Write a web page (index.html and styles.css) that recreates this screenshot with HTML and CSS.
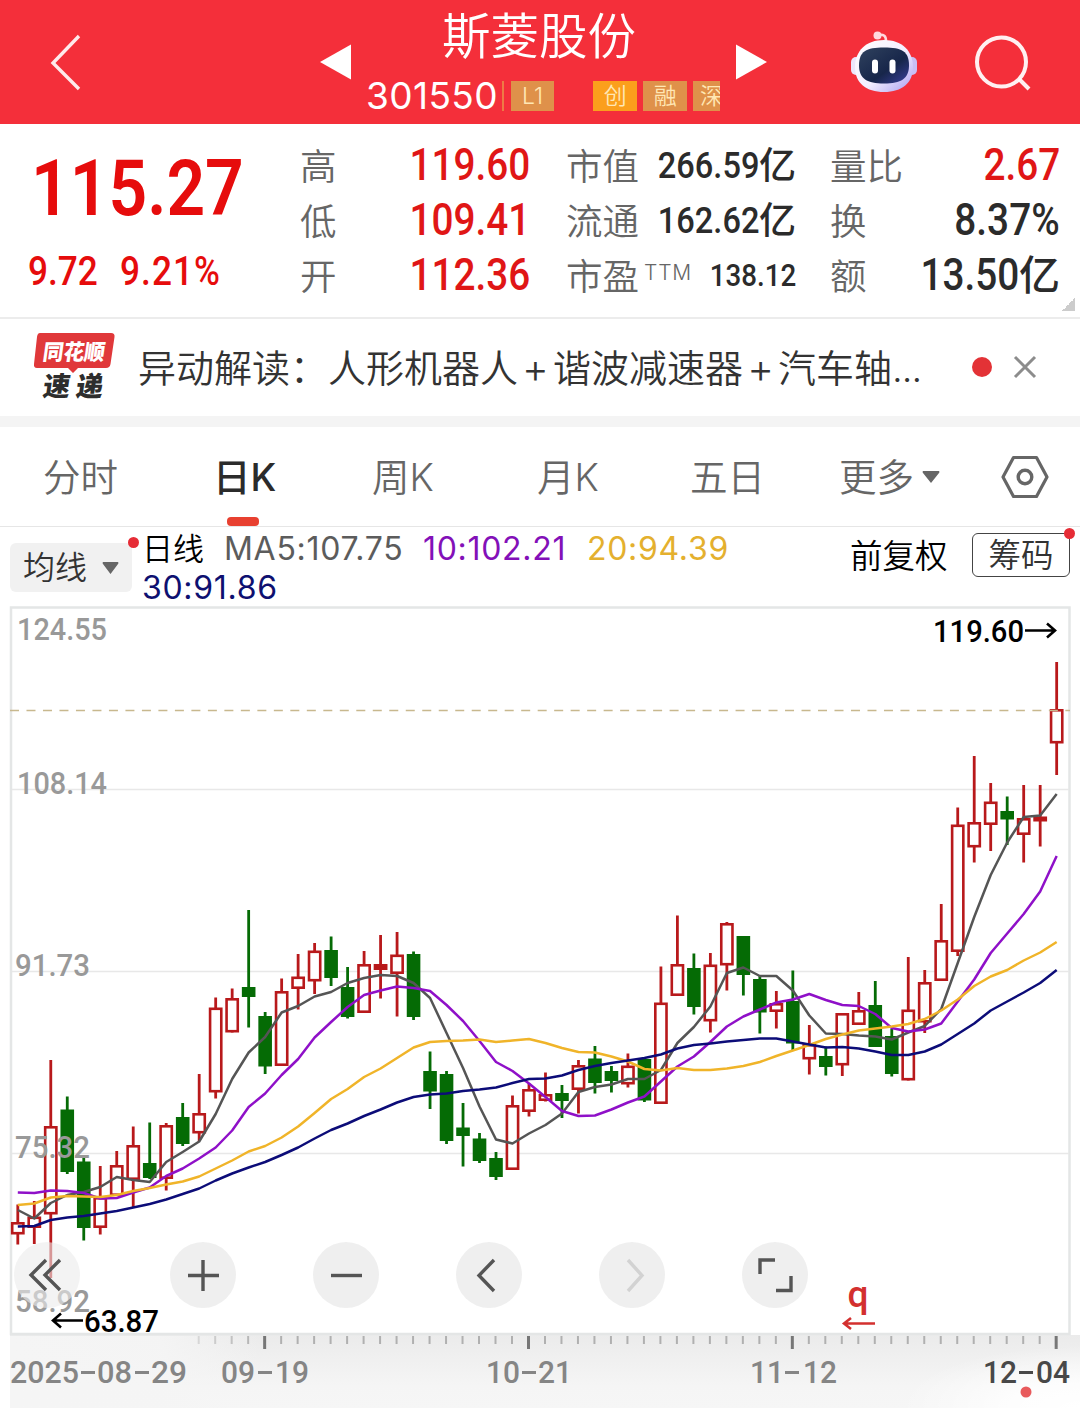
FILE: index.html
```html
<!DOCTYPE html>
<html lang="zh-CN">
<head>
<meta charset="utf-8">
<title>斯菱股份 301550</title>
<link rel="stylesheet" href="styles.css">
</head>
<body>
<header class="topbar">
  <svg class="back" width="34" height="60" viewBox="0 0 34 60"><path d="M31 4 5 31l26 26" fill="none" stroke="#fff" stroke-opacity=".9" stroke-width="3.4"/></svg>
  <svg class="prev" width="32" height="36" viewBox="0 0 32 36"><path d="M0 18 31 0.500v35z" fill="#fff"/></svg>
  <div class="stock">
    <h1 class="stock-name">斯菱股份</h1>
    <div class="stock-meta">
      <span class="code">301550</span><i class="bar"></i>
      <span class="badge level">L1</span>
      <span class="badge hot">创</span>
      <span class="badge">融</span>
      <span class="badge cut">深</span>
    </div>
  </div>
  <svg class="next" width="32" height="36" viewBox="0 0 32 36"><path d="M31 18 0 0.500v35z" fill="#fff"/></svg>
  <svg class="robot" width="68" height="64" viewBox="850 30 68 64">
    <defs>
      <linearGradient id="head" x1="0" y1="0" x2="1" y2="1"><stop offset="0" stop-color="#fff"/><stop offset=".55" stop-color="#f3eeff"/><stop offset="1" stop-color="#a99cf0"/></linearGradient>
      <linearGradient id="face" x1="0" y1="0" x2="1" y2="1"><stop offset="0" stop-color="#30425e"/><stop offset=".6" stop-color="#17264a"/><stop offset="1" stop-color="#3a3f9c"/></linearGradient>
    </defs>
    <path d="M879 35c6-1 8 1 8 6" fill="none" stroke="#ffd9de" stroke-width="2.600"/>
    <circle cx="878.500" cy="35.500" r="4" fill="#ffd9de"/>
    <rect x="852" y="57" width="10" height="18" rx="5" fill="#ece6fb"/>
    <rect x="908" y="57" width="10" height="18" rx="5" fill="#c9bff5"/>
    <path d="M885 40c18 0 29 11 29 27s-11 25-29 25-29-9-29-25 11-27 29-27z" fill="url(#head)"/>
    <path d="M885 47.500c18 0 25 4 25 18 0 13-8 18-25 18s-25-5-25-18c0-14 7-18 25-18z" fill="url(#face)"/>
    <rect x="873" y="59.500" width="6" height="14" rx="3" fill="#fff"/>
    <rect x="890.500" y="59.500" width="6" height="14" rx="3" fill="#fff"/>
  </svg>
  <svg class="search" width="58" height="58" viewBox="0 0 58 58"><circle cx="27.500" cy="28" r="24.500" fill="none" stroke="#fff" stroke-opacity=".93" stroke-width="4"/><path d="m45 45 10 10" stroke="#fff" stroke-opacity=".93" stroke-width="4"/></svg>
</header>

<section class="quote">
  <div class="price">
    <div class="price-now"><span class="num">115.27</span></div>
    <div class="price-diff"><span class="num">9.72</span><span class="num">9.21%</span></div>
  </div>
  <dl class="facts facts-a">
    <dt>高</dt><dd class="up"><span class="num">119.60</span></dd>
    <dt>低</dt><dd class="up"><span class="num">109.41</span></dd>
    <dt>开</dt><dd class="up"><span class="num">112.36</span></dd>
  </dl>
  <dl class="facts facts-b">
    <dt>市值</dt><dd><span class="num">266.59</span>亿</dd>
    <dt>流通</dt><dd><span class="num">162.62</span>亿</dd>
    <dt>市盈<sup>TTM</sup></dt><dd class="small"><span class="num">138.12</span></dd>
  </dl>
  <dl class="facts facts-c">
    <dt>量比</dt><dd class="up"><span class="num">2.67</span></dd>
    <dt>换</dt><dd><span class="num">8.37%</span></dd>
    <dt>额</dt><dd><span class="num">13.50</span>亿</dd>
  </dl>
  <i class="corner"></i>
</section>

<section class="news">
  <svg class="news-logo" width="84" height="74" viewBox="32 331 84 74">
    <path d="M40 333h71q4 0 3.500 4l-4 27q-.6 4-4.500 4H78l-5 5-5-5H37q-3.500 0-3-4l3-27q.5-4 3-4z" fill="#e0383a"/>
    <g class="logo-text"><text transform="translate(42 359.500) skewX(-8)" font-size="22" textLength="62" lengthAdjust="spacingAndGlyphs" fill="#fff">同花顺</text>
    <text transform="translate(42 395.500) skewX(-8)" font-size="27" textLength="60" lengthAdjust="spacing" fill="#2d2d2d">速递</text></g>
  </svg>
  <p class="news-title">异动解读：人形机器人<span class="plus">+</span>谐波减速器<span class="plus">+</span>汽车轴<span class="dots">...</span></p>
  <i class="news-dot"></i>
  <svg class="close" width="24" height="24" viewBox="0 0 24 24"><path d="M2 2l20 20M22 2 2 22" stroke="#8c8c8c" stroke-width="3"/></svg>
</section>

<nav class="tabs">
  <span class="tab">分时</span>
  <span class="tab active">日K</span>
  <span class="tab">周K</span>
  <span class="tab">月K</span>
  <span class="tab">五日</span>
  <span class="tab">更多<svg class="caret" width="18" height="12" viewBox="0 0 18 12"><path d="M1 0h16q1 1 0 2L9 12 1 2Q0 1 1 0z" fill="#666"/></svg></span>
  <svg class="gear" width="48" height="44" viewBox="0 0 48 44"><path d="M12.500 2.500h23L46 22 35.500 41.500h-23L2 22z" fill="none" stroke="#666" stroke-width="3.200" stroke-linejoin="round"/><circle cx="24" cy="22" r="6.800" fill="none" stroke="#666" stroke-width="3.400"/></svg>
</nav>

<section class="legend">
  <div class="picker">均线<svg width="17" height="12" viewBox="0 0 17 12"><path d="M1 0h15q1 1 0 2L8.500 12 1 2Q0 1 1 0z" fill="#666"/></svg><i class="dot"></i></div>
  <div class="averages">
    <div class="line"><span class="period">日线</span><span class="ma5">MA5:107.75</span><span class="ma10">10:102.21</span><span class="ma20">20:94.39</span></div>
    <div class="line"><span class="ma30">30:91.86</span></div>
  </div>
  <span class="adjust">前复权</span>
  <span class="chips">筹码<i class="dot"></i></span>
</section>

<section class="chart">
  <svg class="plot" width="1080" height="802" viewBox="0 606 1080 802">
    <defs>
      <linearGradient id="axis" x1="0" y1="0" x2="0" y2="1"><stop offset="0" stop-color="#ebebeb"/><stop offset=".7" stop-color="#f5f5f5"/><stop offset="1" stop-color="#f6f6f6"/></linearGradient>
      <linearGradient id="fadeLeft"><stop offset="0" stop-color="#f5f5f5"/><stop offset=".6" stop-color="#f5f5f5" stop-opacity=".9"/><stop offset="1" stop-color="#f5f5f5" stop-opacity="0"/></linearGradient>
      <radialGradient id="fadeRight" cx="1" cy="1" r="1"><stop offset="0" stop-color="#fff"/><stop offset=".4" stop-color="#fff" stop-opacity=".8"/><stop offset="1" stop-color="#fff" stop-opacity="0"/></radialGradient>
    </defs>
    <rect x="10" y="1335" width="1070" height="73" fill="url(#axis)"/>
    <g id="ticks"></g>
    <rect x="10" y="1336" width="250" height="72" fill="url(#fadeLeft)"/>
    <rect x="900" y="1346" width="180" height="62" fill="url(#fadeRight)"/>
    <path d="M11 607.500v726.500h1058.500V607.500z" fill="none" stroke="#e4e6e6" stroke-width="2.500"/>
    <path d="M12 789.500h1057M12 971.500h1057M12 1153.500h1057" stroke="#e8e8e8" stroke-width="1.500"/>
    <g id="candles"></g>
    <g id="averages"></g>
    <path d="M10 710.500h1060" stroke="#c8b88e" stroke-width="1.500" stroke-dasharray="9 7.490"/>
    <g class="din scale">
      <text x="17" y="640" textLength="90" lengthAdjust="spacingAndGlyphs">124.55</text>
      <text x="17" y="794" textLength="90" lengthAdjust="spacingAndGlyphs">108.14</text>
      <text x="15" y="976" textLength="75" lengthAdjust="spacingAndGlyphs">91.73</text>
      <text x="15" y="1158" textLength="75" lengthAdjust="spacingAndGlyphs">75.32</text>
      <text x="15" y="1312" textLength="75" lengthAdjust="spacingAndGlyphs">58.92</text>
    </g>
    <g class="din extreme">
      <text x="933" y="642" textLength="91" lengthAdjust="spacingAndGlyphs">119.60</text>
      <text x="84" y="1331.500" textLength="75" lengthAdjust="spacingAndGlyphs">63.87</text>
      <path d="M1025 630.500h29M1047 623.500l8 7-8 7M83 1320.500H54M61 1313.500l-8 7 8 7"/>
    </g>
    <g class="din mark">
      <text x="847.500" y="1307" textLength="21" lengthAdjust="spacingAndGlyphs">q</text>
      <path d="M875 1323.500h-31M851 1318l-7 5.500 7 5.500"/>
    </g>
    <g class="din dates">
      <text x="10" y="1383" textLength="69" lengthAdjust="spacingAndGlyphs">2025</text>
      <text x="97" y="1383" textLength="35" lengthAdjust="spacingAndGlyphs">08</text>
      <text x="151" y="1383" textLength="36" lengthAdjust="spacingAndGlyphs">29</text>
      <text x="221" y="1383" textLength="34" lengthAdjust="spacingAndGlyphs">09</text>
      <text x="275" y="1383" textLength="34" lengthAdjust="spacingAndGlyphs">19</text>
      <text x="486" y="1383" textLength="34" lengthAdjust="spacingAndGlyphs">10</text>
      <text x="538" y="1383" textLength="34" lengthAdjust="spacingAndGlyphs">21</text>
      <text x="750" y="1383" textLength="34" lengthAdjust="spacingAndGlyphs">11</text>
      <text x="803" y="1383" textLength="34" lengthAdjust="spacingAndGlyphs">12</text>
      <path d="M81 1372.500h14M135 1372.500h14M258 1372.500h14M522 1372.500h14M785 1372.500h14"/>
      <g class="today"><text x="983" y="1383" textLength="34" lengthAdjust="spacingAndGlyphs">12</text>
      <text x="1036" y="1383" textLength="34" lengthAdjust="spacingAndGlyphs">04</text>
      <path d="M1019 1372.500h14"/></g>
    </g>
    <circle cx="1026" cy="1392" r="5.500" fill="#e85a5c"/>
  </svg>
  <div class="controls">
    <button class="ctl"><svg viewBox="0 0 66 66"><path d="M32 18 17 33l15 15M46 18 31 33l15 15"/></svg></button>
    <button class="ctl"><svg viewBox="0 0 66 66"><path d="M33 18v31M18 33.500h31"/></svg></button>
    <button class="ctl"><svg viewBox="0 0 66 66"><path d="M18 33.500h31"/></svg></button>
    <button class="ctl"><svg viewBox="0 0 66 66"><path d="M38 18 23 33.500 38 49"/></svg></button>
    <button class="ctl off"><svg viewBox="0 0 66 66"><path d="M29 18l14 15.500L29 49"/></svg></button>
    <button class="ctl"><svg viewBox="0 0 66 66"><path d="M18 32V18h15M34 48.500h15V34"/></svg></button>
  </div>
</section>
<script src="chart.js"></script>
</body>
</html>
```
FILE: styles.css
```css
* { box-sizing: border-box; }
body {
  margin: 0;
  width: 1080px;
  height: 1408px;
  overflow: hidden;
  background: #fff;
  font-family: Inter, "Noto Sans CJK SC", sans-serif;
  font-weight: 350;
  color: #333;
}
h1, p, dl, dd { margin: 0; }
svg { display: block; flex: none; }
.num {
  display: inline-block;
  font-family: Roboto, sans-serif;
  font-weight: 500;
  transform: scaleX(.88);
  transform-origin: right center;
}

/* title bar */
.topbar {
  display: flex;
  align-items: flex-start;
  height: 124px;
  background: #f42f3a;
  color: #fff;
}
.back { margin: 32px 0 0 48px; }
.prev { margin: 44px 0 0 238px; }
.stock { width: 354px; margin-left: 14px; }
.stock-name {
  margin-left: 76px;
  height: 72px;
  line-height: 74px;
  font-size: 48.500px;
  font-weight: 350;
}
.stock-meta { display: flex; align-items: center; height: 47px; }
.code { width: 136px; font-size: 37px; font-weight: 400; letter-spacing: .4px; line-height: 45px; }
.bar { width: 2px; height: 30px; background: #ee7a45; }
.badge {
  width: 44px;
  height: 30px;
  margin-left: 6px;
  line-height: 30px;
  text-align: center;
  font-size: 23px;
  color: #ffe7b4;
  background: #df914a;
  overflow: hidden;
  white-space: nowrap;
}
.badge.level { margin-left: 7px; }
.badge.hot { margin-left: 39px; background: #fb9f1c; }
.badge.cut { width: 27px; padding-left: 7px; text-align: left; }
.next { margin: 44px 0 0 16px; }
.robot { margin: 30px 0 0 81px; }
.search { margin: 34px 0 0 57px; }

/* quote */
.quote {
  position: relative;
  display: flex;
  height: 195px;
  padding-top: 14px;
  border-bottom: 2px solid #ececec;
}
.price { width: 300px; padding-left: 28px; color: #e60c0c; }
.price .num { transform-origin: left center; }
.price-now { height: 102px; padding-left: 3px; line-height: 99px; font-size: 77px; }
.price-now .num { font-weight: 600; }
.price-diff { display: flex; height: 64px; line-height: 64px; font-size: 40px; }
.price-diff .num + .num { margin-left: 13px; letter-spacing: 1.200px; }
.facts {
  display: grid;
  grid-template-columns: 74px 1fr;
  grid-auto-rows: 55px;
  line-height: 55px;
}
.facts dt { padding-top: 1.500px; font-size: 36.500px; color: #666; white-space: nowrap; }
.facts dd { display: flex; justify-content: flex-end; font-size: 41px; font-weight: 500; color: #2b2b2b; white-space: nowrap; }
.facts .num { font-size: 44px; }
.facts-a { width: 230px; }
.facts-b { width: 230px; margin-left: 36px; }
.facts-b dd { font-size: 37px; }
.facts-b .num { font-size: 37px; }
.facts-b .small .num { font-size: 31.500px; line-height: 56px; }
.facts-c { width: 230px; margin-left: 34px; }
.facts dd.up { color: #e01616; }
sup { margin-left: 5px; font-size: 21px; line-height: 0; vertical-align: 10px; letter-spacing: .8px; }
.corner {
  position: absolute;
  right: 5px;
  bottom: 6px;
  width: 13px;
  height: 13px;
  background: linear-gradient(135deg, transparent 50%, #ccc 50%);
}

/* news strip */
.news {
  display: flex;
  align-items: center;
  height: 108px;
  border-bottom: 11px solid #f4f4f4;
}
.news-logo { margin-left: 32px; }
.logo-text { font-family: "Noto Sans CJK SC", sans-serif; font-weight: 900; }
.news-title { display: flex; width: 834px; margin-left: 22px; padding-top: 1px; font-size: 38px; line-height: 97px; white-space: nowrap; }
.plus { width: 35px; text-align: center; font-size: 41px; }
.dots { letter-spacing: -1px; }
.news-dot { width: 20px; height: 20px; margin-bottom: 2px; border-radius: 50%; background: #e33236; }
.close { margin: 0 0 2px 21px; }

/* period tabs */
.tabs { display: flex; height: 100px; border-bottom: 1.500px solid #e6e6e6; }
.tab { position: relative; flex: none; height: 99px; line-height: 102px; font-size: 37.500px; color: #666; white-space: nowrap; }
.tab:nth-child(1) { width: 170px; margin-left: 43px; }
.tab:nth-child(2) { width: 159px; }
.tab:nth-child(3) { width: 165px; }
.tab:nth-child(4) { width: 153px; }
.tab:nth-child(5) { width: 149px; }
.tab:nth-child(6) { display: flex; width: 162px; }
.tab.active { color: #2b2b2b; font-weight: 500; }
.tab.active::after {
  content: "";
  position: absolute;
  left: 14px;
  bottom: 0;
  width: 32px;
  height: 9px;
  border-radius: 4px;
  background: #e84030;
}
.caret { margin: 44px 0 0 8px; }
.gear { margin-top: 28px; }

/* moving average legend */
.legend { display: flex; height: 79px; }
.dot { position: absolute; border-radius: 50%; background: #e62c36; }
.picker {
  position: relative;
  display: flex;
  align-items: center;
  width: 122px;
  height: 49px;
  margin: 16px 0 0 10px;
  padding-left: 13px;
  gap: 15px;
  border-radius: 6px;
  background: #f1f1f1;
  font-size: 32px;
  line-height: 47px;
}
.picker .dot { width: 11px; height: 11px; right: -7px; top: -6px; }
.averages { width: 708px; margin-left: 10px; padding-top: 2px; font-size: 32px; font-weight: 400; white-space: nowrap; }
.averages .line { display: flex; height: 38.500px; line-height: 39px; }
.averages span { flex: none; letter-spacing: .7px; }
.averages .period { width: 82px; font-size: 31px; font-weight: 350; letter-spacing: 0; color: #000; }
.averages .ma5 { width: 199px; color: #5c5c5c; }
.ma10 { width: 164px; color: #8310b8; }
.ma20 { color: #e4b02e; }
.ma30 { color: #0e1070; }
.adjust { width: 122px; line-height: 60px; font-size: 32.500px; color: #000; }
.chips {
  position: relative;
  width: 98px;
  height: 44px;
  margin-top: 6px;
  border: 1.500px solid #444;
  border-radius: 6px;
  text-align: center;
  line-height: 44px;
  font-size: 32.500px;
}
.chips .dot { width: 11px; height: 11px; right: -6px; top: -6px; }

/* chart */
.chart { position: relative; height: 802px; }
.din { font-family: Roboto, sans-serif; font-size: 31.500px; }
.scale { fill: #999; font-weight: 500; }
.extreme { fill: #000; font-weight: 500; }
.extreme path { fill: none; stroke: #000; stroke-width: 2.600; }
.mark { fill: #d3302f; font-size: 37px; font-weight: 500; }
.mark path { fill: none; stroke: #d3302f; stroke-width: 2.600; }
.dates { fill: #858585; font-weight: 500; }
.dates path { fill: none; stroke: #858585; stroke-width: 3; }
.today { fill: #484848; font-weight: 500; }
.today path { stroke: #484848; }
.controls { position: absolute; left: 14px; top: 636px; display: flex; gap: 77px; }
.ctl {
  width: 66px;
  height: 66px;
  padding: 0;
  border: 0;
  border-radius: 50%;
  background: rgba(235, 235, 235, .78);
}
.ctl:first-child { margin-right: 13px; background: rgba(235, 235, 235, .6); }
.ctl path { fill: none; stroke: #555; stroke-width: 3.400; }
.ctl.off path { stroke: #d2d2d2; }
```
FILE: chart.js
```js
// Each candle: [rising, high, body top, body bottom, low] in plot units.
const candles = [
  [1,1204.5,1222,1234.5,1244.5],[1,1201,1216.5,1228,1244],[1,1060,1126,1214.5,1278],[0,1096.5,1109.5,1172,1174],
  [0,1158,1161.5,1228,1240.5],[1,1166,1197,1228,1234.5],[1,1151,1165,1196,1196],[1,1126.5,1145,1180,1207],
  [0,1122.5,1163,1178,1179],[1,1123,1125,1179,1190.5],[0,1103,1117,1144,1146],[1,1074,1113,1133.5,1141],
  [1,997.5,1007.5,1092.5,1098.5],[1,988.5,998,1032.5,1032.5],[0,910,987,997,1027.5],[0,1012,1016,1066.5,1074],
  [1,978.5,991,1066,1066],[1,954,976.5,989,1009.5],[1,943,950.5,981.5,994],[0,936.5,950,978,986],
  [0,967,987,1017,1018.5],[1,951,964,1013,1013],[1,935,964,970,998.5],[1,932,954.5,974,1016.5],
  [0,951.5,954,1017,1020],[0,1051.5,1071,1091.5,1109],[0,1071,1074,1141,1144],[0,1103,1127.5,1136,1166.5],
  [0,1133,1138.5,1161,1163],[0,1152,1158,1177,1180],[1,1095.5,1105,1170,1170],[1,1083.5,1089,1112,1116.5],
  [1,1072.5,1094,1101,1101.5],[0,1085,1093,1101,1118],[1,1060,1065,1090,1113.5],[0,1046,1058.5,1083,1093.5],
  [0,1066,1071,1081,1092.5],[1,1053.5,1065.5,1084.5,1087.5],[0,1058.5,1059,1100.5,1102],[1,966.5,1002.5,1104,1104],
  [1,915.5,964,996,996],[0,953.5,968,1007,1014.5],[1,953,964.5,1021.5,1032.5],[1,922,923,965.5,990.5],
  [0,936,936,975,995.5],[0,976,979,1012.5,1033.5],[1,991,1003,1012,1028.5],[0,970.5,1001,1043.5,1050],
  [1,1025,1044,1059.5,1074.5],[0,1046.5,1056,1067,1075.5],[1,1013,1013,1065.5,1076],[1,992,1010,1025,1025],
  [0,981,1005,1047,1047],[0,1029,1036,1074,1076.5],[1,957,1009.5,1080.5,1080.5],[1,970,982,1022.5,1033],
  [1,904,940,981,981],[1,807.5,824.5,952,956],[1,756,822,847.5,862.5],[1,783,801.5,825,851],
  [0,796.5,811,819.5,845],[1,785,818,835,862.5],[1,785,816.5,821.5,846.5],[1,662,709,743.5,775]
];

const averages = {
  '#555555': [1210,1218.5,1203,1195,1192,1187,1177,1180,1182,1162,1152,1141.5,1114,1079,1052.5,1037,1012.5,1006,996.5,992,983,978,975,976,983,998,1033,1068,1106.5,1139.5,1143.5,1133.5,1125,1113.5,1092,1087,1084.5,1079,1079,1070,1043,1027,1006.5,973,967.5,976,976,990.5,1015.5,1033.5,1034,1035.5,1036.5,1039.5,1032.5,1026,1009,963,917,875,842.5,817,815.5,794],
  '#8f10c8': [1192.5,1193,1190.5,1191,1193,1198.5,1198,1192.5,1187.5,1176,1168.5,1158.5,1147.5,1130.5,1107,1093.5,1075,1059,1037.5,1022,1007,995,990.5,986.5,988,991,1005,1021,1041,1062,1071,1083.5,1097,1111,1116,1115.5,1109.5,1102.5,1096.5,1081.5,1066.5,1056.5,1042,1026.5,1016.5,1009.5,1002.5,999.5,994,1000,1005,1006,1014,1028,1031.5,1029.5,1023.5,1001.5,979.5,953,933.5,914,891.5,856],
  '#f0b429': [1205,1203.5,1197.5,1196,1196.5,1197,1195,1191,1188,1184.5,1181.5,1176.5,1168.5,1160.5,1151.5,1146,1137.5,1126.5,1113,1099,1089,1077,1068.5,1058,1047.5,1042,1041,1040.5,1039.5,1042,1040.5,1039,1043,1048,1052,1052.5,1056.5,1061.5,1069,1070.5,1068,1070,1070,1068.5,1066,1062,1056,1050.5,1045,1039,1034.5,1030.5,1028.5,1026.5,1024,1019,1010.5,999.5,986,976.5,970,960.5,952.5,942],
  '#0c0c78': [1226.5,1226,1220,1217.5,1216,1213.5,1211,1207.5,1204,1199.5,1194,1188.5,1180.5,1173.5,1167.5,1162,1155,1147.5,1138.5,1130,1123.5,1116,1109.5,1102.5,1097,1094.5,1093.5,1091,1089.5,1087.5,1083,1079,1078.5,1075.5,1070,1066,1063,1060.5,1058,1054.5,1048.5,1045,1043.5,1041.5,1040,1038.5,1038.5,1041.5,1044.5,1047.5,1047,1048.5,1051.5,1055,1055,1051.5,1044.5,1034,1023.5,1010.5,1001.5,992.5,983,970]
};

const xAt = i => 17.8 + i * 16.49;
const add = (parent, tag, attrs) => {
  const el = document.createElementNS('http://www.w3.org/2000/svg', tag);
  for (const key in attrs) el.setAttribute(key, attrs[key]);
  document.getElementById(parent).appendChild(el);
};

candles.forEach(([rising, high, top, bottom, low], i) => {
  const x = xAt(i);
  const color = rising ? '#b8191b' : '#056b05';
  const wicks = `M${x} ${high}V${top + 1}M${x} ${bottom - 1}V${low}`;
  add('candles', 'path', { d: wicks, stroke: color, 'stroke-width': 2.8 });
  if (rising) {
    add('candles', 'rect', { x: x - 5.6, y: top + 1.3, width: 11.2, height: Math.max(bottom - top - 2.6, 1), fill: bottom - top < 7 ? color : '#fff', stroke: color, 'stroke-width': 2.6 });
  } else {
    add('candles', 'rect', { x: x - 6.8, y: top, width: 13.6, height: bottom - top, fill: color });
  }
});

for (const color in averages) {
  const points = averages[color].map((y, i) => `${xAt(i)},${y}`).join(' ');
  add('averages', 'polyline', { points, fill: 'none', stroke: color, 'stroke-width': 2.5, 'stroke-linejoin': 'round' });
}

for (let i = 11; i < candles.length; i++) {
  const major = i % 16 === 15;
  add('ticks', 'path', { d: `M${xAt(i) - 0.5} 1336v${major ? 13 : 8}`, stroke: major ? '#777' : '#b0b0b0', 'stroke-width': major ? 3 : 2 });
}
```
